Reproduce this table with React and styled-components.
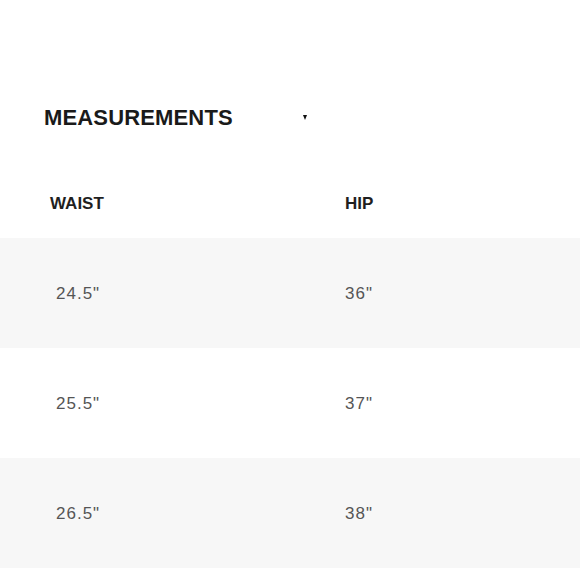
import React from "react";
import styled, { createGlobalStyle } from "styled-components";

const Global = createGlobalStyle`
  html, body { margin: 0; padding: 0; background: #fff; }
  body { font-family: "Liberation Sans", Arial, sans-serif; }
`;

const Page = styled.div`
  padding-top: 105px;
`;

const TitleBar = styled.div`
  display: flex;
  align-items: center;
  justify-content: space-between;
  width: 263px;
  margin-left: 44px;
  margin-bottom: 37px;
  height: 26px;
`;

const Title = styled.h2`
  margin: 0;
  font-size: 22px;
  line-height: 26px;
  font-weight: 700;
  color: #1a1a1a;
  letter-spacing: 0.15px;
`;

const Caret = styled.span`
  width: 0;
  height: 0;
  border-left: 2.5px solid transparent;
  border-right: 2.5px solid transparent;
  border-top: 5px solid #111;
  margin-top: -1px;
`;

const Row = styled.div`
  display: grid;
  grid-template-columns: 345px 1fr;
  align-items: center;
  height: ${(p) => p.$h}px;
  background: ${(p) => (p.$shaded ? "#f7f7f7" : "#fff")};
`;

const HeadCell = styled.div`
  font-size: 17px;
  font-weight: 700;
  color: #1f1f1f;
  padding-top: 2px;
  padding-left: ${(p) => p.$pad || 0}px;
`;

const Cell = styled.div`
  font-size: 17px;
  color: #555;
  letter-spacing: 1px;
  padding-top: 1px;
  padding-left: ${(p) => p.$pad || 0}px;
`;

const data = [
  ["24.5\"", "36\""],
  ["25.5\"", "37\""],
  ["26.5\"", "38\""],
];

export default function App() {
  return (
    <>
      <Global />
      <Page>
        <TitleBar>
          <Title>MEASUREMENTS</Title>
          <Caret />
        </TitleBar>
        <Row $h={70}>
          <HeadCell $pad={50}>WAIST</HeadCell>
          <HeadCell>HIP</HeadCell>
        </Row>
        {data.map((r, i) => (
          <Row key={i} $h={110} $shaded={i % 2 === 0}>
            <Cell $pad={56}>{r[0]}</Cell>
            <Cell>{r[1]}</Cell>
          </Row>
        ))}
      </Page>
    </>
  );
}
